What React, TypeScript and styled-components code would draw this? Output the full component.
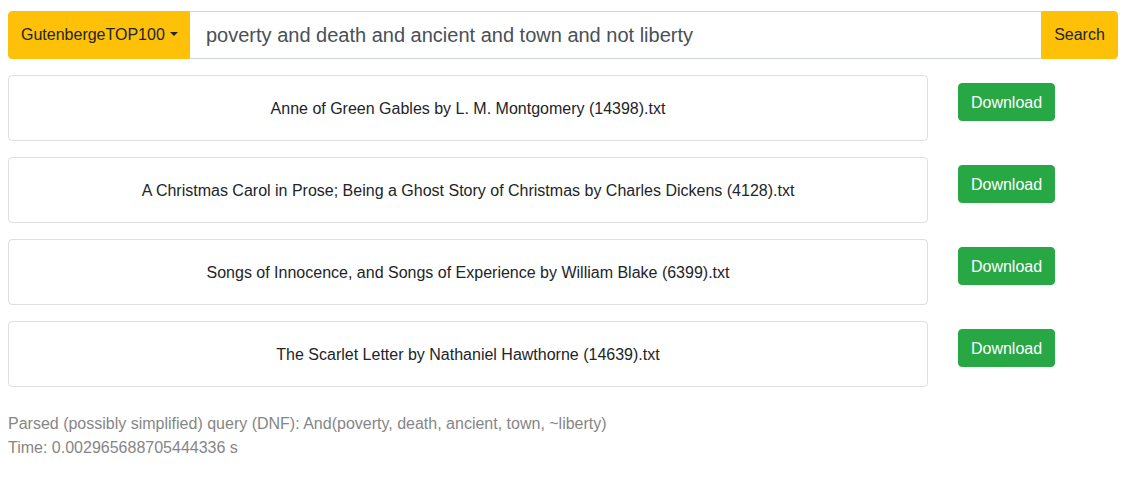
import React from "react";
import styled, { createGlobalStyle } from "styled-components";

const Global = createGlobalStyle`
  body {
    margin: 8px;
    font-family: "Liberation Sans", Arial, sans-serif;
    font-size: 16px;
    line-height: 1.5;
    color: #212529;
    background: #fff;
  }
  * { box-sizing: border-box; }
`;

const SearchBar = styled.div`
  display: flex;
  width: 1110px;
  height: 48px;
  margin-top: 3px;
`;

const DropButton = styled.button`
  display: flex;
  align-items: center;
  gap: 5px;
  background: #ffc107;
  border: 1px solid #ffc107;
  border-radius: 4px 0 0 4px;
  color: #212529;
  font-family: inherit;
  font-size: 16px;
  padding: 0 12px;
  width: 182px;
  &::after {
    content: "";
    border-top: 4.5px solid #212529;
    border-left: 4px solid transparent;
    border-right: 4px solid transparent;
    margin-top: -2px;
  }
`;

const QueryInput = styled.input`
  flex: 1;
  min-width: 0;
  border: 1px solid #ced4da;
  border-left: none;
  border-right: none;
  padding: 0 16px;
  font-family: inherit;
  font-size: 20px;
  color: #495057;
  outline: none;
`;

const SearchButton = styled.button`
  background: #ffc107;
  border: 1px solid #ffc107;
  border-radius: 0 4px 4px 0;
  color: #212529;
  font-family: inherit;
  font-size: 16px;
  width: 77px;
`;

const Results = styled.div`
  display: flex;
  flex-direction: column;
  gap: 16px;
  margin-top: 16px;
`;

const Row = styled.div`
  display: flex;
  align-items: flex-start;
  gap: 30px;
`;

const Card = styled.div`
  width: 920px;
  height: 66px;
  border: 1px solid rgba(0, 0, 0, 0.125);
  border-radius: 4px;
  display: flex;
  align-items: center;
  justify-content: center;
  padding-top: 2px;
  font-size: 16px;
`;

const DownloadButton = styled.button`
  margin-top: 8px;
  height: 38px;
  width: 97px;
  background: #28a745;
  border: 1px solid #28a745;
  border-radius: 4px;
  color: #fff;
  font-family: inherit;
  font-size: 16px;
  padding: 2px 0 0;
`;

const Info = styled.div`
  margin-top: 25px;
  color: #868686;
  font-size: 16px;
  line-height: 24px;
`;

const books = [
  "Anne of Green Gables by L. M. Montgomery (14398).txt",
  "A Christmas Carol in Prose; Being a Ghost Story of Christmas by Charles Dickens (4128).txt",
  "Songs of Innocence, and Songs of Experience by William Blake (6399).txt",
  "The Scarlet Letter by Nathaniel Hawthorne (14639).txt",
];

export default function App() {
  return (
    <>
      <Global />
      <SearchBar>
        <DropButton>GutenbergeTOP100</DropButton>
        <QueryInput defaultValue="poverty and death and ancient and town and not liberty" />
        <SearchButton>Search</SearchButton>
      </SearchBar>
      <Results>
        {books.map((b) => (
          <Row key={b}>
            <Card>{b}</Card>
            <DownloadButton>Download</DownloadButton>
          </Row>
        ))}
      </Results>
      <Info>
        <div>Parsed (possibly simplified) query (DNF): And(poverty, death, ancient, town, ~liberty)</div>
        <div>Time: 0.002965688705444336 s</div>
      </Info>
    </>
  );
}
